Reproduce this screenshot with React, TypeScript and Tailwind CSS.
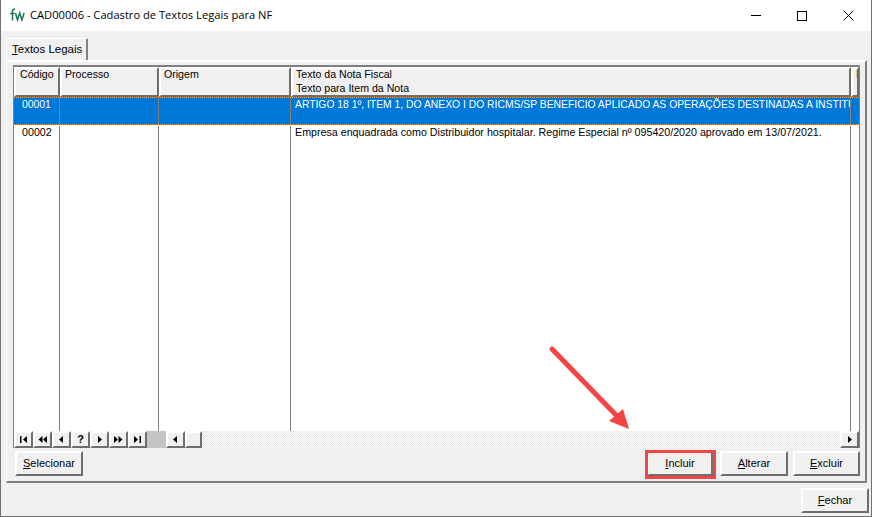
import React from 'react';

const bevel = 'border-2 border-t-white border-l-white border-r-[#6e6e6e] border-b-[#6e6e6e] bg-[#f0f0f0]';
const rowCols = 'grid grid-cols-[46px_99px_132px_560px_1fr]';

const U: React.FC<{ children: string }> = ({ children }) => <span className="underline">{children}</span>;

const ActionButton: React.FC<{ className: string; children: React.ReactNode }> = ({ className, children }) => (
    <button className={`h-[25px] flex items-center justify-center text-[11px] text-black ${bevel} ${className}`}>
        {children}
    </button>
);

const NavButton: React.FC<{ children: React.ReactNode }> = ({ children }) => (
    <div className={`w-[19px] h-[17px] flex items-center justify-center ${bevel}`}>{children}</div>
);

const Glyph: React.FC<{ d: string }> = ({ d }) => (
    <svg width="11" height="9" viewBox="0 0 11 9" fill="#000"><path d={d} /></svg>
);

const HeaderCell: React.FC<{ className: string; children: React.ReactNode }> = ({ className, children }) => (
    <div className={`${bevel} overflow-hidden whitespace-nowrap ${className}`}>
        <div className="-mt-[2px]">{children}</div>
    </div>
);

const Row: React.FC<{ selected?: boolean; code: string; text: string }> = ({ selected, code, text }) => (
    <div className={`${rowCols} h-[28px] leading-[13px] ${selected ? 'text-[10.35px] bg-[#0078d7] text-white border-y border-dotted border-[#f0a040]' : 'text-[10.7px] bg-white text-black pt-[1px]'}`}>
        <div className="border-r border-[#808080] pl-[8px]">{code}</div>
        <div className="border-r border-[#808080]" />
        <div className="border-r border-[#808080]" />
        <div className="border-r border-[#808080] pl-[4px] overflow-hidden whitespace-nowrap">{text}</div>
        <div />
    </div>
);

export default function App() {
    return (
        <div className="relative w-[872px] h-[517px] flex flex-col bg-[#f0f0f0] border-l border-r border-b border-[#707070] overflow-hidden font-['Liberation_Sans',sans-serif]">
            <div className="h-[31px] shrink-0 bg-white flex items-center pl-[8px]">
                <svg className="-mt-[1px]" width="18" height="14" viewBox="0 0 18 14" fill="none" stroke="#1f7a5c" strokeWidth="1.5">
                    <path d="M3.5 12.5V3.5c0-1.6.8-2.4 2.6-2.4M1 5.5h4.5M6.5 5l2 7 2.2-7 2.2 7 2.2-7" />
                </svg>
                <span className="ml-[3px] text-[11.15px] text-black whitespace-nowrap font-['Open_Sans',sans-serif]">CAD00006 - Cadastro de Textos Legais para NF</span>
                <div className="ml-auto flex items-center">
                    <div className="w-[46px] flex justify-center"><div className="w-[10px] h-px bg-black" /></div>
                    <div className="w-[46px] flex justify-center"><div className="w-[10px] h-[10px] border border-black" /></div>
                    <div className="w-[46px] flex justify-center">
                        <svg width="11" height="11" viewBox="0 0 11 11" stroke="#000" strokeWidth="1"><path d="M.5.5l10 10M10.5.5l-10 10" /></svg>
                    </div>
                </div>
            </div>

            <div className="h-[452px] shrink-0 pl-[5px] pr-[4px] pt-[7px] flex flex-col">
                <div className="w-[82px] h-[22px] shrink-0 border-t border-l border-white border-r-2 border-r-[#808080] rounded-t-[2px] bg-[#f0f0f0] flex items-center pl-[5px] text-[11.5px] text-black whitespace-nowrap">
                    <span><U>T</U>extos Legais</span>
                </div>
                <div className="flex-1 min-h-0 border-t-2 border-t-white border-l border-l-white border-r-2 border-r-[#808080] border-b-2 border-b-[#808080] pl-[6px] pr-[5px] pt-[3px] flex flex-col">
                    <div className="h-[383px] shrink-0 flex flex-col border-t-2 border-l border-r border-[#808080] bg-white">
                        <div className={`${rowCols} h-[30px] shrink-0 text-[10.6px] text-black leading-[14px] bg-[#f0f0f0]`}>
                            <HeaderCell className="pl-[4px]">Código</HeaderCell>
                            <HeaderCell className="pl-[3px]">Processo</HeaderCell>
                            <HeaderCell className="pl-[3px]">Origem</HeaderCell>
                            <HeaderCell className="pl-[3px]">Texto da Nota Fiscal<br />Texto para Item da Nota</HeaderCell>
                            <HeaderCell className="pl-[3px]">D</HeaderCell>
                        </div>
                        <Row selected code="00001" text="ARTIGO 18 1º, ITEM 1, DO ANEXO I DO RICMS/SP BENEFICIO APLICADO AS OPERAÇÕES DESTINADAS A INSTITUIÇÕES" />
                        <Row code="00002" text="Empresa enquadrada como Distribuidor hospitalar. Regime Especial nº 095420/2020 aprovado em 13/07/2021." />
                        <div className={`${rowCols} flex-1 min-h-0`}>
                            <div className="border-r border-[#808080]" />
                            <div className="border-r border-[#808080]" />
                            <div className="border-r border-[#808080]" />
                            <div className="border-r border-[#808080]" />
                            <div />
                        </div>
                        <div className="h-[17px] shrink-0 flex bg-[repeating-conic-gradient(#e4e4e4_0%_25%,#fff_0%_50%)] bg-[length:2px_2px]">
                            <NavButton><Glyph d="M2 1h1.5v7H2zM9 1v7L5 4.5z" /></NavButton>
                            <NavButton><Glyph d="M5.5 1v7L1.5 4.5zM10 1v7L6 4.5z" /></NavButton>
                            <NavButton><Glyph d="M7 1v7L3 4.5z" /></NavButton>
                            <NavButton><span className="text-[11px] font-bold leading-none">?</span></NavButton>
                            <NavButton><Glyph d="M4 1v7l4-3.5z" /></NavButton>
                            <NavButton><Glyph d="M1 1v7l4-3.5zM5.5 1v7l4-3.5z" /></NavButton>
                            <NavButton><Glyph d="M2 1v7l4-3.5zM7.5 1H9v7H7.5z" /></NavButton>
                            <div className="w-[19px] bg-[#c4c4c4]" />
                            <NavButton><Glyph d="M7 1v7L3 4.5z" /></NavButton>
                            <div className={`w-[17px] ${bevel}`} />
                            <div className="ml-auto"><NavButton><Glyph d="M4 1v7l4-3.5z" /></NavButton></div>
                        </div>
                    </div>
                    <div className="flex pt-[3px] pl-[2px]">
                        <ActionButton className="w-[68px]"><span><U>S</U>elecionar</span></ActionButton>
                        <div className="ml-auto flex gap-[5px]">
                            <div className="relative mr-[2px]">
                                <ActionButton className="w-[66px]"><span><U>I</U>ncluir</span></ActionButton>
                                <div className="absolute -left-[2px] -right-[3px] -top-[1px] -bottom-[3px] border-[3px] border-[#f44444] pointer-events-none" />
                            </div>
                            <ActionButton className="w-[68px]"><span><U>A</U>lterar</span></ActionButton>
                            <ActionButton className="w-[67px]"><span><U>E</U>xcluir</span></ActionButton>
                        </div>
                    </div>
                </div>
            </div>

            <div className="flex-1 flex justify-end items-start pt-[5px] pr-[2px]">
                <ActionButton className="w-[68px]"><span><U>F</U>echar</span></ActionButton>
            </div>

            <svg className="absolute left-[544px] top-[340px] pointer-events-none" width="90" height="90" viewBox="0 0 90 90" fill="none">
                <path d="M7 9L71 75" stroke="#f44444" strokeWidth="5" strokeLinecap="round" />
                <path d="M84 89L64 81L78 69Z" fill="#f44444" />
            </svg>
        </div>
    );
}
